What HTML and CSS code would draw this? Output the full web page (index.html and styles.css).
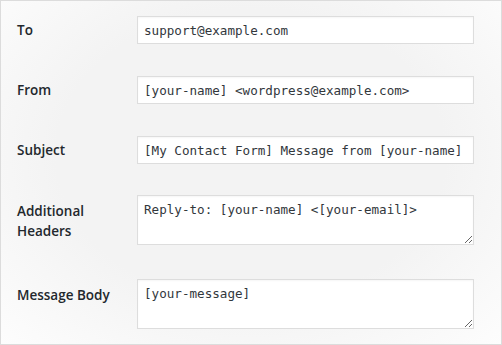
FILE: index.html
```html
<!DOCTYPE html>
<html lang="en">
<head>
    <meta charset="UTF-8">
    <meta name="viewport" content="width=device-width, initial-scale=1.0">
    <title>Mail settings</title>
    <link rel="stylesheet" href="styles.css">
</head>
<body>
    <!-- Mail panel -->
    <div class="mail-panel">
        <div class="row">
            <label class="row-label" for="mail-to">To</label>
            <input class="field" type="text" id="mail-to" value="support@example.com">
        </div>
        <div class="row">
            <label class="row-label" for="mail-from">From</label>
            <input class="field" type="text" id="mail-from" value="[your-name] <wordpress@example.com>">
        </div>
        <div class="row">
            <label class="row-label" for="mail-subject">Subject</label>
            <input class="field" type="text" id="mail-subject" value="[My Contact Form] Message from [your-name]">
        </div>
        <div class="row row-headers">
            <label class="row-label label-top" for="mail-headers">Additional Headers</label>
            <textarea class="field field-area" id="mail-headers">Reply-to: [your-name] &lt;[your-email]&gt;</textarea>
        </div>
        <div class="row row-body">
            <label class="row-label label-top" for="mail-body">Message Body</label>
            <textarea class="field field-area" id="mail-body">[your-message]</textarea>
        </div>
    </div>
</body>
</html>
```

FILE: styles.css
```css
body {
    margin: 0;
    background-color: #fff;
    font-family: 'Open Sans', 'Noto Sans', sans-serif;
    color: #23282d;
}

.mail-panel {
    box-sizing: border-box;
    width: 502px;
    height: 345px;
    border: 1px solid #dcdcdc;
    background: radial-gradient(ellipse at 50% 45%, #f3f3f3 55%, #fdfdfd 100%);
}

.row {
    display: grid;
    grid-template-columns: 136px 337px;
    align-items: center;
    padding: 15px 0 17px;
}

.row-headers {
    align-items: start;
    padding: 14px 0 19px;
}

.row-body {
    align-items: start;
    padding: 15px 0 15px;
}

.row-label {
    padding: 0 12px 0 16px;
    font-size: 13.5px;
    font-weight: 600;
    line-height: 20px;
}

.label-top {
    padding-top: 6px;
}

.field {
    box-sizing: border-box;
    width: 337px;
    height: 28px;
    margin: 0;
    padding: 0 6px;
    border: 1px solid #dddddd;
    border-radius: 0;
    background-color: #fff;
    box-shadow: inset 0 1px 2px rgba(0, 0, 0, 0.04);
    font-family: 'DejaVu Sans Mono', 'Liberation Mono', monospace;
    font-size: 12.6px;
    color: #32373c;
    outline: none;
}

.field-area {
    display: block;
    height: 50px;
    padding: 5px 6px;
    line-height: 18px;
    resize: both;
}
```
